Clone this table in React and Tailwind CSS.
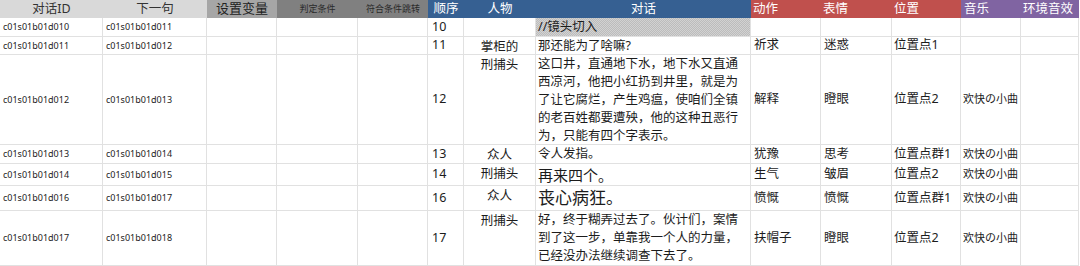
import React from "react";

const F = { fontFamily: '"Noto Sans","Noto Sans CJK SC",sans-serif' };

const rows = [
  { h: "h-[19px]", id: "c01s01b01d010", next: "c01s01b01d011", n: "10", who: "", text: null, act: "", face: "", pos: "", music: "" },
  { h: "h-[18px]", id: "c01s01b01d011", next: "c01s01b01d012", n: "11", who: "掌柜的", text: ["那还能为了啥嘛?"], act: "祈求", face: "迷惑", pos: "位置点1", music: "" },
  { h: "h-[90px]", id: "c01s01b01d012", next: "c01s01b01d013", n: "12", who: "刑捕头", text: ["这口井，直通地下水，地下水又直通", "西凉河，他把小红扔到井里，就是为", "了让它腐烂，产生鸡瘟，使咱们全镇", "的老百姓都要遭殃，他的这种丑恶行", "为，只能有四个字表示。"], act: "解释", face: "瞪眼", pos: "位置点2", music: "欢快の小曲" },
  { h: "h-[19px]", id: "c01s01b01d013", next: "c01s01b01d014", n: "13", who: "众人", text: ["令人发指。"], act: "犹豫", face: "思考", pos: "位置点群1", music: "欢快の小曲" },
  { h: "h-[22px]", id: "c01s01b01d014", next: "c01s01b01d015", n: "14", who: "刑捕头", text: ["再来四个。"], size: "text-[15px]", act: "生气", face: "皱眉", pos: "位置点2", music: "欢快の小曲" },
  { h: "h-[25px]", id: "c01s01b01d016", next: "c01s01b01d017", n: "16", who: "众人", text: ["丧心病狂。"], size: "text-[17px]", act: "愤慨", face: "愤慨", pos: "位置点群1", music: "欢快の小曲" },
  { h: "h-[55px]", id: "c01s01b01d017", next: "c01s01b01d018", n: "17", who: "刑捕头", text: ["好，终于糊弄过去了。伙计们，案情", "到了这一步，单靠我一个人的力量，", "已经没办法继续调查下去了。"], act: "扶帽子", face: "瞪眼", pos: "位置点2", music: "欢快の小曲" },
];

const cell = "border-r border-b border-[#e1e1e1] flex overflow-hidden whitespace-nowrap";

export default function App() {
  return (
    <div className="w-[1080px] h-[266px] bg-white overflow-hidden text-[#1c1c1c]" style={F}>
      <div className="grid grid-cols-[103px_104px_70px_81px_70px_36px_72px_215px_70px_71px_69px_60px_58px] w-[1079px]">
        {/* header */}
        <div className="h-[18px] bg-[#d9d9d9] flex items-center justify-center text-[12.5px] text-[#333]">对话ID</div>
        <div className="h-[18px] bg-[#d9d9d9] flex items-center justify-center text-[12.5px] text-[#333]">下一句</div>
        <div className="h-[18px] bg-[#a6a6a6] flex items-center justify-center text-[13px] text-[#222]">设置变量</div>
        <div className="h-[18px] bg-[#808080] flex items-center justify-center text-[9px] text-[#2a2a2a]">判定条件</div>
        <div className="h-[18px] bg-[#808080] flex items-center justify-center text-[9px] text-[#2a2a2a]">符合条件跳转</div>
        <div className="h-[18px] bg-[#366092] flex items-center justify-center text-[12.5px] text-white">顺序</div>
        <div className="h-[18px] bg-[#366092] flex items-center justify-center text-[12.5px] text-white">人物</div>
        <div className="h-[18px] bg-[#366092] flex items-center justify-center text-[12.5px] text-white">对话</div>
        <div className="h-[18px] bg-[#c0504d] flex items-center pl-[2px] text-[12.5px] text-white">动作</div>
        <div className="h-[18px] bg-[#c0504d] flex items-center pl-[2px] text-[12.5px] text-white">表情</div>
        <div className="h-[18px] bg-[#c0504d] flex items-center pl-[2px] text-[12.5px] text-white">位置</div>
        <div className="h-[18px] bg-[#8064a2] flex items-center pl-[3px] text-[12.5px] text-white">音乐</div>
        <div className="h-[18px] bg-[#8064a2] flex items-center pl-[2px] text-[12.5px] text-white">环境音效</div>

        {rows.map((r, i) => (
          <React.Fragment key={i}>
            <div className={`${cell} ${r.h} items-center pl-[3px] text-[9px]`}>{r.id}</div>
            <div className={`${cell} ${r.h} items-center pl-[3px] text-[9px]`}>{r.next}</div>
            <div className={`${cell} ${r.h}`}></div>
            <div className={`${cell} ${r.h}`}></div>
            <div className={`${cell} ${r.h}`}></div>
            <div className={`${cell} ${r.h} items-center pl-[4px] text-[12.5px]`}>{r.n}</div>
            <div className={`${cell} ${r.h} items-start justify-center pt-[1px] text-[12.5px] leading-[17px]`}>{r.who}</div>
            {r.text === null ? (
              <div className={`${cell} ${r.h} items-center pl-[2px] text-[12.5px] bg-[repeating-conic-gradient(#bcbcbc_0_25%,#d2d2d2_0_50%)] bg-[length:2px_2px]`}>//镜头切入</div>
            ) : (
              <div className={`${cell} ${r.h} flex-col justify-center pl-[2px] ${r.size || "text-[12.5px]"} leading-[18px]`}>
                {r.text.map((t, j) => (
                  <div key={j}>{t}</div>
                ))}
              </div>
            )}
            <div className={`${cell} ${r.h} items-center pl-[3px] text-[12.5px]`}>{r.act}</div>
            <div className={`${cell} ${r.h} items-center pl-[3px] text-[12.5px]`}>{r.face}</div>
            <div className={`${cell} ${r.h} items-center pl-[2px] text-[12.5px]`}>{r.pos}</div>
            <div className={`${cell} ${r.h} items-center pl-[2px] text-[11px]`}>{r.music}</div>
            <div className={`${cell} ${r.h}`}></div>
          </React.Fragment>
        ))}
      </div>
    </div>
  );
}
